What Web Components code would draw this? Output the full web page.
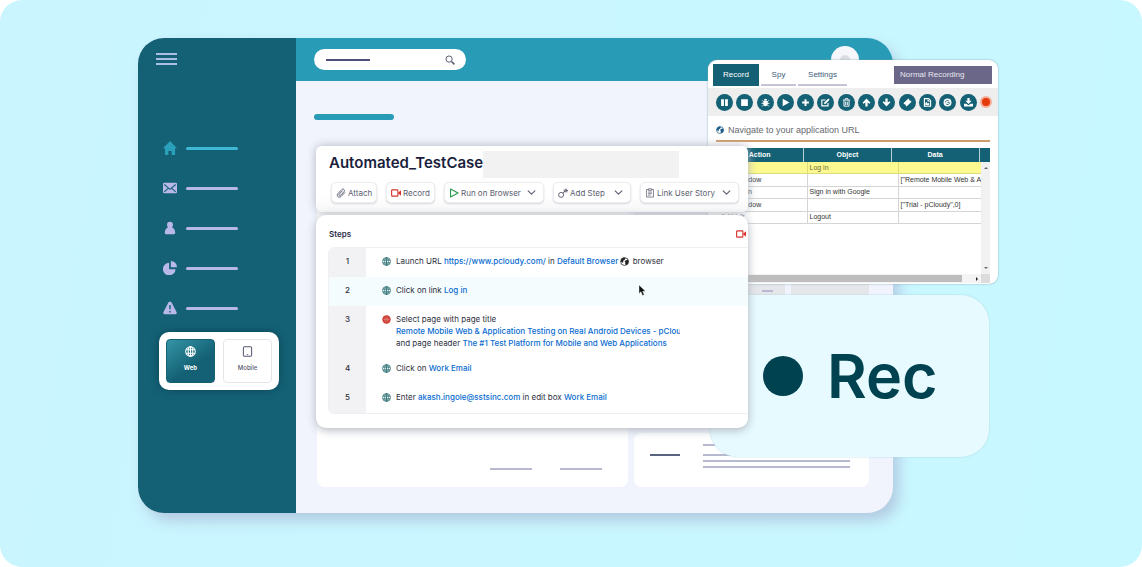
<!DOCTYPE html>
<html lang="en">
<head>
<meta charset="utf-8">
<meta name="viewport" content="width=device-width, initial-scale=1">
<title>Test recorder</title>
<style>
  body { margin: 0; background: #fff; font-family: Inter, "Open Sans", sans-serif; color: #2b2f4a; }
</style>
</head>
<body>
<record-scene></record-scene>
<script>
const ICONS = {
  home: '<path fill="currentColor" d="M8 0 0 8.2h2.2V16h3.9v-4.5h3.8V16h3.9V8.2H16z"/>',
  mail: '<rect x="0" y="2" width="16" height="12" rx="1.5" fill="currentColor"/><path d="m1.5 4 6.5 5.5L14.500 4M1.500 12.500l4.500-4M14.500 12.500l-4.500-4" fill="none" stroke="#146175" stroke-width="1.200"/>',
  person: '<circle cx="8" cy="4.200" r="3.400" fill="currentColor"/><path fill="currentColor" d="M5.500 6h5v1.500c2 .8 3.500 3 3.500 6 0 1-.5 1.500-1.500 1.500h-9c-1 0-1.500-.5-1.500-1.500 0-3 1.500-5.200 3.500-6z"/>',
  pie: '<path fill="currentColor" d="M7 2v7.300h7.300A7.200 7.200 0 1 1 7 2z"/><path fill="currentColor" d="M9 0a7 7 0 0 1 7 7H9z"/>',
  warn: '<path fill="currentColor" d="M8 .8c1 0 1.600.5 2.300 1.800l5 9.600c.9 1.700.2 3-1.600 3H2.300c-1.800 0-2.500-1.300-1.600-3l5-9.600C6.400 1.300 7 .8 8 .8z"/><path stroke="#146175" stroke-width="1.600" d="M8 4.500v5M8 11.300v1.800"/>',
  search: '<circle cx="6.500" cy="6.500" r="5" fill="none" stroke="currentColor" stroke-width="1.500"/><path d="m10.500 10.500 4.500 4.500" stroke="currentColor" stroke-width="2.400"/>',
  globe: '<g fill="none" stroke="currentColor" stroke-width="1.500"><circle cx="8" cy="8" r="7"/><ellipse cx="8" cy="8" rx="3.300" ry="7"/><path d="M8 1v14M1.500 5.500h13M1.500 10.500h13"/></g>',
  tablet: '<rect x="2" y="1" width="12" height="14" rx="2" fill="none" stroke="currentColor" stroke-width="1.500"/><path d="M7 12.500h2" stroke="currentColor" stroke-width="1.200"/>',
  clip: '<path fill="none" stroke="currentColor" stroke-width="1.500" stroke-linecap="round" d="M14 7.500 8 13.600c-3.600 3.400-8.200-1-4.800-4.800l6-6.200c2.600-2.400 5.900.8 3.500 3.400L7 11.800c-1.500 1.300-3.300-.4-2-1.900l5-5.200"/>',
  video: '<rect x="1" y="3" width="10" height="10" rx="1" fill="none" stroke="currentColor" stroke-width="1.800"/><path fill="currentColor" d="m11 8 5-4.500v9z"/>',
  run: '<path d="M2.500 1.500 14.500 8l-12 6.500z" fill="none" stroke="currentColor" stroke-width="1.800" stroke-linejoin="round"/>',
  step: '<circle cx="5" cy="11" r="4" fill="none" stroke="currentColor" stroke-width="1.500"/><path d="m8 8 6-6M10 6V2.500M10.500 6H15M12.500 3.500V1M13 4h3" fill="none" stroke="currentColor" stroke-width="1.500"/>',
  story: '<path d="M5 2.500H2.500v12h11v-12H11M5.500 1.200h5v2.600h-5zM5 6.500h6M5 9h6M5 11.500h4" fill="none" stroke="currentColor" stroke-width="1.200"/>',
  chevron: '<path d="m2 5 6 6 6-6" fill="none" stroke="currentColor" stroke-width="1.900" stroke-linecap="round" stroke-linejoin="round"/>',
  stop: '<circle cx="8" cy="8" r="7.500" fill="#cf3f36"/><path d="M3 8h10M4.500 5.500h7M4.500 10.500h7" stroke="#e58e86" stroke-width="1.200"/>',
  earth: '<circle cx="8" cy="8" r="7" fill="#fff" stroke="currentColor" stroke-width="1.400"/><path fill="currentColor" d="M2 4.500 6.500 1 10 2.500 8 5.500 5.500 6.500 6 9 4.500 10 1.500 8zM11.500 5.500 15 5v6l-3.500 3-2.500-1 .5-3.500-1.500-2z"/>',
  pause: '<path fill="currentColor" d="M2 2h5v12H2zM9 2h5v12H9z"/>',
  square: '<path fill="currentColor" d="M2 2h12v12H2z"/>',
  bug: '<ellipse cx="8" cy="9.500" rx="4" ry="5" fill="currentColor"/><path fill="currentColor" d="M5 4.500a3 3 0 0 1 6 0z"/><path d="M1 9.500h14M2 4l3 3M14 4l-3 3M2 15l3-3M14 15l-3-3" stroke="currentColor" stroke-width="1.600"/>',
  play: '<path fill="currentColor" d="M3 1.500 15 8 3 14.500z"/>',
  plus: '<path d="M8 2v12M2 8h12" stroke="currentColor" stroke-width="3.400"/>',
  edit: '<path d="M12.500 9v5h-11V3.500H8" fill="none" stroke="currentColor" stroke-width="2"/><path d="m5.500 10.500.7-3L13 .8 15.300 3 8.500 10z" fill="currentColor"/>',
  trash: '<path d="M1.500 3.700h13M5.500 3V1.300h5V3M3.500 4.500v10h9v-10M6.500 6.500v6M9.500 6.500v6" fill="none" stroke="currentColor" stroke-width="1.700"/>',
  up: '<path fill="currentColor" d="M8 1 15 8.500l-1.600 1.700-3.400-2V15H6V8.200l-3.400 2L1 8.500z"/>',
  down: '<path fill="currentColor" d="M8 15 1 7.500l1.600-1.700 3.400 2V1h4v6.800l3.400-2L15 7.500z"/>',
  ticket: '<path fill="currentColor" d="M9.500.8 11 2.300c-.4 1.500 1 3 2.600 2.600l1.600 1.600-8.700 8.700L5 13.700c.4-1.500-1-3-2.600-2.600L.8 9.500z"/>',
  report: '<path d="M2.500 1.200H10l3.500 3.500v10h-11z" fill="none" stroke="currentColor" stroke-width="2"/><path fill="currentColor" d="M4 13V9l2.500-2 2 3L11 8v5z"/><path fill="currentColor" d="M8 2v4h5z"/>',
  refresh: '<circle cx="8" cy="8" r="7" fill="currentColor"/><path d="M4 8a4 4 0 0 1 7-2.300M12 8a4 4 0 0 1-7 2.300M8 8h3" fill="none" stroke="#146175" stroke-width="1.400"/>',
  download: '<path fill="currentColor" d="M6 0h4v5h3.500L8 10.500 2.500 5H6zM0 10h4l4 3 4-3h4v5H0z"/>'
};

/* Base class: every component renders its static view() into an open shadow root. */
class View extends HTMLElement {
  connectedCallback() {
    if (this.shadowRoot) return;
    const t = document.createElement('template');
    t.innerHTML = '<style>*{box-sizing:border-box}</style>' + this.view();
    this.attachShadow({ mode: 'open' }).append(t.content.cloneNode(true));
  }
}
const define = (name, view) =>
  customElements.define(name, class extends View { view() { return view(this); } });

define('ui-icon', el => `
<style>
  :host { display: inline-block; flex: none; width: var(--size, 10px); height: var(--size, 10px); }
  svg { display: block; width: 100%; height: 100%; }
</style>
<svg viewBox="0 0 16 16" aria-hidden="true">${ICONS[el.getAttribute('name')]}</svg>`);

define('nav-item', el => `
<style>
  :host { display: block; color: #b8b9e8; --size: 14px; }
  :host([active]) { color: #2aa0bb; }
  a { display: flex; align-items: center; gap: 9px; height: 40px; color: inherit; }
  span { width: 52px; height: 3px; border-radius: 2px; background: currentColor; }
  :host([active]) span { background: #3fb8d6; }
</style>
<a href="#" aria-label="${el.getAttribute('label')}"><ui-icon name="${el.getAttribute('icon')}"></ui-icon><span></span></a>`);

define('platform-switch', () => `
<style>
  :host { display: flex; gap: 8px; padding: 7px; border-radius: 10px; background: #fff;
          box-shadow: 0 0 8px #0b4656; }
  button { flex: 1; display: flex; flex-direction: column; align-items: center; gap: 7px; height: 44px;
           padding: 6px 0 0; border: 1px solid #e4e6ec; border-radius: 4px; background: #fff;
           color: #55586e; font: 500 6px/8px Inter, sans-serif; --size: 11px; }
  button[aria-pressed=true] { border-color: #146175; color: #fff; font-weight: 700;
           background: linear-gradient(145deg, #3495a4, #146175 60%); }
</style>
<button aria-pressed="true"><ui-icon name="globe"></ui-icon>Web</button>
<button aria-pressed="false"><ui-icon name="tablet"></ui-icon>Mobile</button>`);

define('side-bar', () => `
<style>
  :host { display: block; width: 158px; background: #146175; }
  .menu { display: grid; gap: 3px; width: 21px; margin: 15px 0 0 18px; padding: 0; border: 0; background: none; }
  .menu i { height: 2px; background: #a9bfe8; }
  nav { margin: 63px 0 0 25px; }
  platform-switch { margin: 4px 17px 0 21px; }
</style>
<button class="menu" aria-label="Menu"><i></i><i></i><i></i></button>
<nav>
  <nav-item active icon="home" label="Home"></nav-item>
  <nav-item icon="mail" label="Mail"></nav-item>
  <nav-item icon="person" label="People"></nav-item>
  <nav-item icon="pie" label="Reports"></nav-item>
  <nav-item icon="warn" label="Alerts"></nav-item>
</nav>
<platform-switch></platform-switch>`);

define('top-bar', () => `
<style>
  :host { display: flex; align-items: center; justify-content: space-between; height: 43px;
          padding: 0 34px 0 18px; background: #289bb6; }
  .search { display: flex; align-items: center; justify-content: space-between; width: 152px; height: 21px;
            padding: 0 11px 0 12px; border-radius: 11px; background: #fff; color: #55586e; }
  .search i { width: 44px; height: 2px; background: #4b4f7a; }
  .avatar { display: grid; place-items: center; width: 28px; height: 28px; border-radius: 50%; background: #f6f7fa; }
  .avatar i { width: 10px; height: 10px; border-radius: 50%; background: #dcdde2; }
</style>
<div class="search"><i></i><ui-icon name="search"></ui-icon></div>
<div class="avatar"><i></i></div>`);

define('dashboard-cards', () => `
<style>
  :host { display: grid; grid-template-columns: 311fr 151fr 78fr; grid-template-rows: 277px 54px; gap: 6px;
          margin: 30px 24px 0 21px; }
  div { border-radius: 8px; background: #fff; }
  i { display: block; height: 2px; background: #b6b9d0; }
  .big { grid-row: 1 / 3; display: flex; align-items: end; justify-content: end; gap: 28px; padding: 0 26px 17px; }
  .big i { width: 42px; }
  .dim { background: #e4e6ea; border-radius: 0; }
  .dim i { width: 11px; margin: 140px 0 0 128px; }
  .wide { grid-column: 2 / 4; display: flex; gap: 23px; padding: 11px 19px 0 16px; }
  .mark { width: 30px; margin-top: 10px; background: #5a6480; }
  .lines { flex: 1; display: grid; align-content: start; gap: 4px; }
  .lines i:first-child { margin-bottom: 4px; }
</style>
<div class="big"><i></i><i></i></div>
<div class="dim"><i></i></div>
<div class="dim"></div>
<div class="wide"><i class="mark"></i><section class="lines"><i></i><i></i><i></i><i></i></section></div>`);

define('app-window', () => `
<style>
  :host { display: flex; min-height: 475px; border-radius: 26px; overflow: hidden; background: #f1f4fd;
          box-shadow: 6px 8px 14px #b3cbe2; }
  main { flex: 1; min-width: 0; }
  h2 { width: 80px; height: 6px; margin: 33px 0 0 18px; border-radius: 3px; background: #289bb6; }
</style>
<side-bar></side-bar>
<main><top-bar></top-bar><h2 aria-label="Section"></h2><dashboard-cards></dashboard-cards></main>`);

define('rec-badge', () => `
<style>
  :host { display: flex; align-items: center; gap: 24px; height: 162px; padding-left: 53px; border-radius: 28px;
          background: #e6faff; color: #00424f; font: 600 61px/72px Inter, sans-serif;
          box-shadow: 0 0 2px #a9d5de; }
  i { width: 40px; height: 40px; border-radius: 50%; background: currentColor; }
</style>
<i></i><span><slot></slot></span>`);

define('step-data', () => `
<style>
  :host { display: grid; grid-template-columns: 1fr 9px; grid-template-rows: 14px 1fr 9px; height: 135px;
          font: 7px/10px "Liberation Sans", Arial, sans-serif; color: #333; }
  table { width: 100%; border-collapse: collapse; table-layout: fixed; }
  .head { grid-column: 1 / 3; height: 14px; }
  th { padding: 0; background: #146175; color: #fff; font-weight: 700; border-right: 1px solid #b8d0d6; }
  th:last-child { width: 11px; border: 0; }
  .view { overflow: hidden; }
  .view table { height: 62px; }
  td { padding: 0 0 0 2px; overflow: hidden; white-space: nowrap; border: solid #d5d5d5; border-width: 0 1px 1px 0; }
  td:last-child { width: 83px; border-right: 0; }
  .hit td { background: #fbf98f; color: #6b6a3a; border-color: #dedb7c; }
  .v { display: flex; flex-direction: column; justify-content: space-between; align-items: center; padding: 5px 0; background: #f1f1f1; }
  .v i { border: 2px solid transparent; }
  .v i:first-child { border-bottom-color: #666; border-top: 0; }
  .v i:last-child { border-top-color: #666; border-bottom: 0; }
  .h { display: flex; align-items: center; justify-content: space-between; padding-right: 3px; background: #f4f4f4; }
  .h b { width: 94%; height: 7px; background: #bdbdbd; }
  .h i { border: 2px solid transparent; border-left-color: #222; border-right: 0; }
  .corner { background: #dcdcdc; }
</style>
<table class="head"><tr><th>Action</th><th>Object</th><th>Data</th><th aria-label="Scroll"></th></tr></table>
<div class="view"><table aria-label="Recorded actions">
  <tr class="hit"><td>click</td><td>Log in</td><td></td></tr>
  <tr><td>selectWindow</td><td></td><td>["Remote Mobile Web &amp; Ap</td></tr>
  <tr><td>clickButton</td><td>Sign in with Google</td><td></td></tr>
  <tr><td>selectWindow</td><td></td><td>["Trial - pCloudy",0]</td></tr>
  <tr><td>clickLink</td><td>Logout</td><td></td></tr>
</table></div>
<div class="v"><i></i><i></i></div>
<div class="h"><b></b><i></i></div>
<div class="corner"></div>`);

define('recorder-window', () => `
<style>
  :host { display: block; border-radius: 9px; background: #fff; overflow: hidden; padding: 4px 0 1px;
          font: 8px/10px "Liberation Sans", Arial, sans-serif; color: #3d4f6b;
          box-shadow: 0 0 2px #7fa3b3; }
  header { display: flex; align-items: center; gap: 2px; padding: 0 6px 0 5px; }
  button { font: inherit; padding: 0; border: 0; }
  .tab { height: 22px; padding-top: 2px; background: #fff; color: #3d5a7a; border-bottom: 2px solid #c6c4d4; }
  .tab[aria-selected=true] { width: 46px; padding-top: 0; background: #146175; color: #fff; border: 0; }
  .spy { width: 35px; }
  .set { width: 49px; }
  select { appearance: none; width: 98px; height: 18px; margin-left: auto; padding: 0 6px; border: 0; border-radius: 0;
           background: #6b6788; color: #e8e7f0; font: inherit; }
  .tools { display: flex; align-items: center; justify-content: space-between; height: 28px; margin-top: 2px;
           padding: 0 6px 0 8px; background: #eee; --size: 9px; }
  .tools button { display: grid; place-items: center; width: 17px; height: 17px; border-radius: 50%;
           background: #146175; color: #fff; }
  .tools .dot { width: 12px; height: 12px; background: #e33a0c; border: 2px solid #f5ac98; }
  label { display: flex; align-items: center; gap: 4px; height: 26px; margin: 0 8px 6px; padding-top: 4px;
          border-bottom: 2px solid #cf9c6c; color: #1b5a86; --size: 8px; }
  input { flex: 1; min-width: 0; padding: 0; border: 0; outline: 0; background: none; font: 9px/12px "Liberation Sans", Arial, sans-serif; }
  input::placeholder { color: #66696e; opacity: 1; }
  step-data { margin: 0 8px; }
</style>
<header role="tablist">
  <button class="tab" role="tab" aria-selected="true">Record</button>
  <button class="tab spy" role="tab" aria-selected="false">Spy</button>
  <button class="tab set" role="tab" aria-selected="false">Settings</button>
  <select aria-label="Recording mode"><option>Normal Recording</option></select>
</header>
<div class="tools">
  ${['pause','square','bug','play','plus','edit','trash','up','down','ticket','report','refresh','download']
    .map(n => `<button aria-label="${n}"><ui-icon name="${n}"></ui-icon></button>`).join('')}
  <button class="dot" aria-label="record"></button>
</div>
<label><ui-icon name="earth"></ui-icon><input aria-label="Application URL" placeholder="Navigate to your application URL"></label>
<step-data></step-data>`);

define('action-button', el => `
<style>
  :host { display: block; color: #5b5d70; min-width: 0; }
  button { display: flex; align-items: center; gap: 2px; width: 100%; height: 21px; padding: 0 4px; border: 1px solid #ededf1;
           border-radius: 5px; background: #fff; color: inherit; font: 400 8px/10px Inter, sans-serif; white-space: nowrap;
           box-shadow: 0 1px 2px #d6d6dc; --size: 10px; }
  .lead { color: var(--lead, #5b5d70); }
  .more { margin-left: auto; --size: 9px; margin-right: 3px; }
</style>
<button><ui-icon class="lead" name="${el.getAttribute('icon')}"></ui-icon><slot></slot>
${el.hasAttribute('menu') ? '<ui-icon class="more" name="chevron"></ui-icon>' : ''}</button>`);

define('case-header', () => `
<style>
  :host { display: block; padding: 5px 9px 9px 13px; border-radius: 6px; background: linear-gradient(#fff 75%, #f7f7f8);
          box-shadow: 0 0 10px #b0b4be; }
  .title { display: flex; align-items: start; justify-content: space-between; height: 27px; padding-right: 60px; }
  h1 { margin: 0; padding-top: 2px; font: 600 15px/20px Inter, sans-serif; color: #1b1f3d; }
  .title i { flex: 1; height: 27px; background: #f2f2f2; }
  .actions { display: grid; grid-template-columns: 46fr 49fr 100fr 78fr 99fr; gap: 9px; margin: 4px 0 0 2px; }
</style>
<div class="title"><h1>Automated_TestCase</h1><i></i></div>
<div class="actions">
  <action-button icon="clip">Attach</action-button>
  <action-button icon="video" style="--lead:#d8322c">Record</action-button>
  <action-button icon="run" menu style="--lead:#2d9c4d">Run on Browser</action-button>
  <action-button icon="step" menu>Add Step</action-button>
  <action-button icon="story" menu>Link User Story</action-button>
</div>`);

define('case-steps', () => `
<style>
  :host { display: block; position: relative; padding-bottom: 14px; border-radius: 10px; background: #fff; overflow: hidden;
          box-shadow: 0 2px 10px #b0b4be; font: 400 8px/12px Inter, sans-serif; color: #2e3040; }
  header { display: flex; align-items: center; justify-content: space-between; height: 32px; padding: 5px 2px 0 13px; color: #d8322c; }
  h2 { margin: 0; font: 600 8px/12px Inter, sans-serif; color: #2b2f4a; }
  .frame { margin-left: 12px; border: 1px solid #f0f0f2; border-right: 0; border-radius: 6px 0 0 6px; overflow: hidden; }
  table { width: 100%; border-collapse: collapse; }
  tr { height: 29px; vertical-align: top; }
  th, td { padding: 7px 0 6px; text-align: left; }
  th { width: 37px; background: #f2f2f4; font-weight: 500; text-align: center; }
  .on th, .on td { background: #f4fcfd; }
  .ico { width: 30px; padding-left: 16px; color: #2c6f73; --size: 9px; }
  .ico ui-icon { display: block; margin-top: 2px; }
  a { color: #0a6cd0; text-decoration: none; font-weight: 500; }
  .cut { display: block; width: 284px; overflow: hidden; white-space: nowrap; }
  .br { margin: 0 1px 0 0; vertical-align: -2px; color: #222; --size: 9px; }
  .cursor { position: absolute; left: 322px; top: 70px; width: 8px; height: 11px; }
</style>
<header><h2>Steps</h2><ui-icon name="video"></ui-icon></header>
<div class="frame"><table aria-label="Steps">
  <tr><th>1</th><td class="ico"><ui-icon name="globe"></ui-icon></td><td>Launch URL <a href="#">https://www.pcloudy.com/</a> in <a href="#">Default Browser</a> <ui-icon class="br" name="earth"></ui-icon> browser</td></tr>
  <tr class="on"><th>2</th><td class="ico"><ui-icon name="globe"></ui-icon></td><td>Click on link <a href="#">Log in</a></td></tr>
  <tr><th>3</th><td class="ico"><ui-icon name="stop"></ui-icon></td><td>Select page with page title<a class="cut" href="#">Remote Mobile Web &amp; Application Testing on Real Android Devices - pCloudy</a>and page header <a href="#">The #1 Test Platform for Mobile and Web Applications</a></td></tr>
  <tr><th>4</th><td class="ico"><ui-icon name="globe"></ui-icon></td><td>Click on <a href="#">Work Email</a></td></tr>
  <tr><th>5</th><td class="ico"><ui-icon name="globe"></ui-icon></td><td>Enter <a href="#">akash.ingole@sstsinc.com</a> in edit box <a href="#">Work Email</a></td></tr>
</table></div>
<svg class="cursor" viewBox="0 0 8 11" aria-hidden="true"><path d="M1 0v8.500l2-1.800L4.500 10.500l1.700-.8L4.700 6.200H7.500z" fill="#111" stroke="#fff" stroke-width=".4"/></svg>`);

/* Overlapping windows share one grid; column lines mark their left and right edges. */
define('record-scene', () => `
<style>
  :host { display: grid; align-items: start; min-height: 100vh; border-radius: 22px;
          background: linear-gradient(100deg, #caf5ff, #c8f8ff);
          grid-template-columns: 138fr [app-start] 178fr [edit-start] 392fr [recorder-start] 2fr [rec-start] 38fr [edit-end] 145fr [app-end] 96fr [rec-end] 9fr [recorder-end] 144fr; }
  app-window { grid-column: app-start / app-end; grid-row: 1; min-width: 0; margin: 38px 0 54px; }
  rec-badge { grid-column: rec-start / rec-end; grid-row: 1; min-width: 0; margin-top: 295px; }
  recorder-window { grid-column: recorder-start / recorder-end; grid-row: 1; min-width: 0; margin-top: 60px; }
  .editor { grid-column: edit-start / edit-end; grid-row: 1; min-width: 0; margin-top: 146px; display: grid; gap: 3px; }
</style>
<app-window></app-window>
<rec-badge>Rec</rec-badge>
<recorder-window></recorder-window>
<section class="editor"><case-header></case-header><case-steps></case-steps></section>`);
</script>
</body>
</html>
